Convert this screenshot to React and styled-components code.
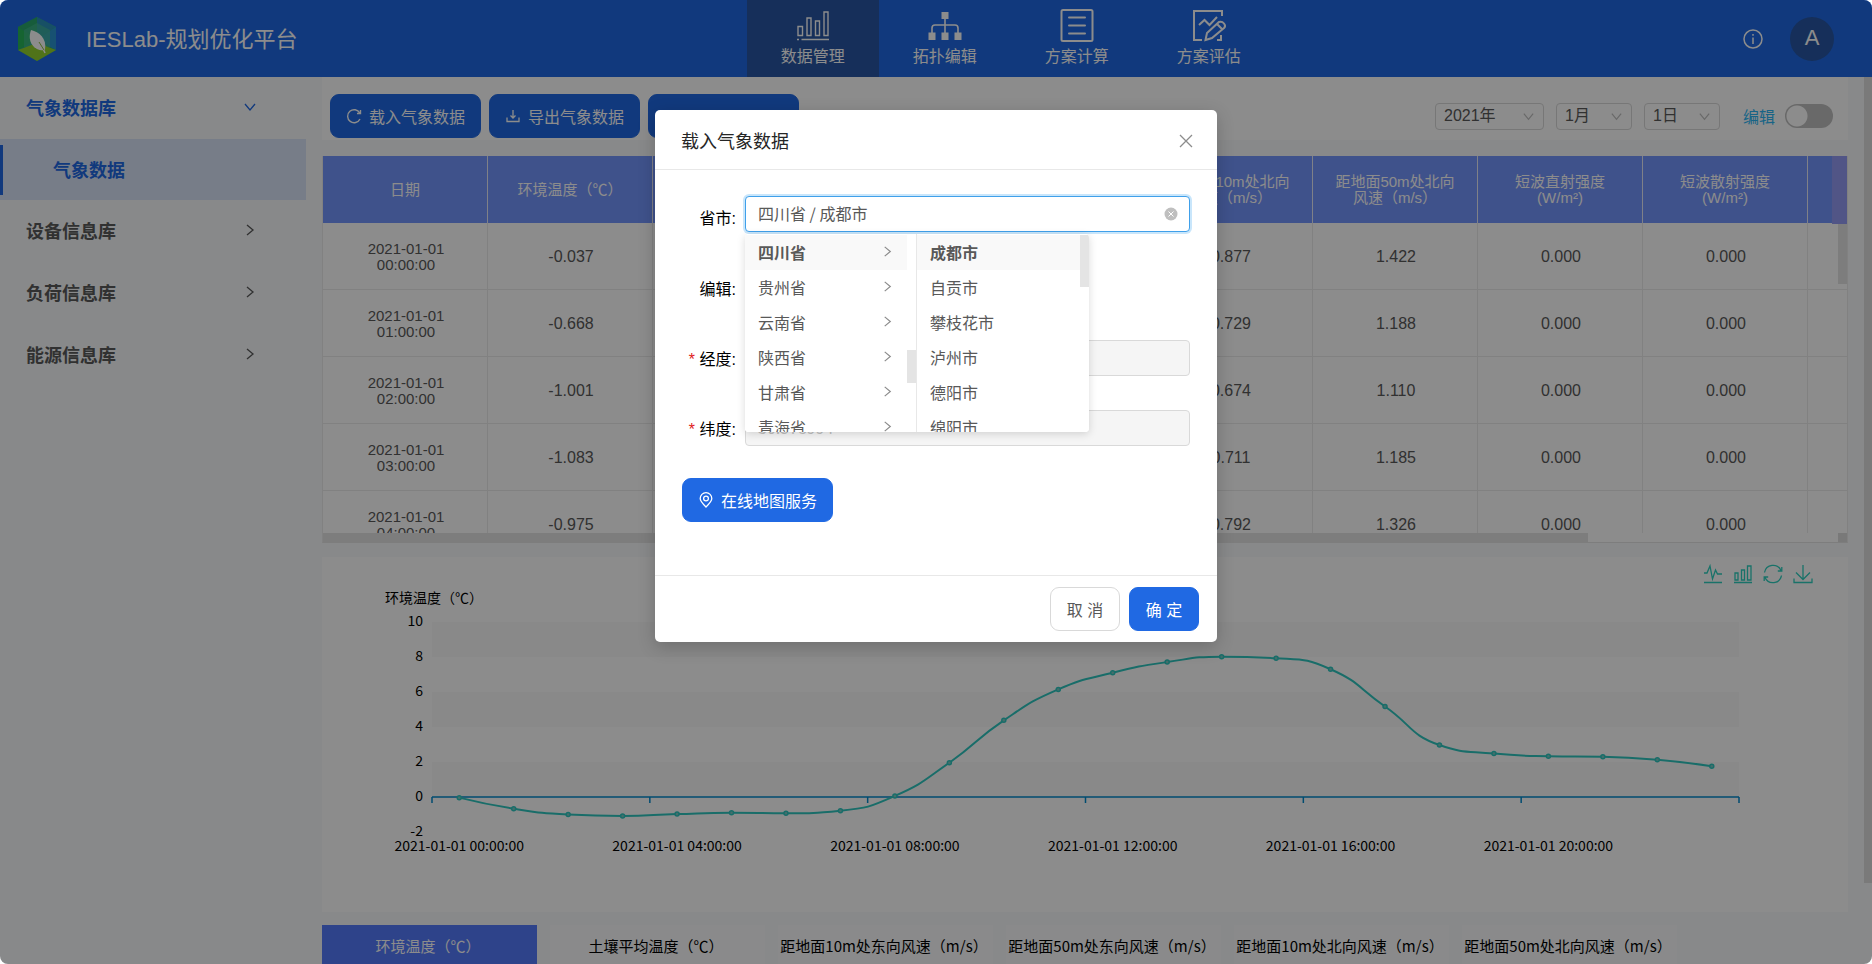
import React from "react";
import styled, { createGlobalStyle, css } from "styled-components";

const Global = createGlobalStyle`
  * { box-sizing: border-box; }
  html, body { margin: 0; background: #fff; }
  body { font-family: "Liberation Sans", "Noto Sans CJK SC", sans-serif; font-size: 16px; color: #595959; }
  button, input, select { font: inherit; color: inherit; }
`;

const blue = "#2069e3";
const cjk = `"Noto Sans CJK SC", sans-serif`;

const Shell = styled.div`
  position: relative;
  display: flex;
  flex-direction: column;
  height: 100vh;
  overflow: hidden;
  border-radius: 8px;
  background: #f7f9fb;
`;

const Header = styled.header`
  display: grid;
  grid-template-columns: 5fr auto 4fr;
  flex: none;
  height: 77px;
  background: ${blue};
  color: #fff;
`;
const Brand = styled.div`
  display: flex;
  align-items: center;
  gap: 29px;
  padding-left: 17px;
  font-size: 22px;
  span { padding-bottom: 4px; }
`;
const Nav = styled.nav`
  display: flex;
`;
const NavItem = styled.a`
  display: flex;
  flex-direction: column;
  align-items: center;
  gap: 2px;
  width: 132px;
  padding-top: 9px;
  color: #fff;
  font-size: 16px;
  line-height: 24px;
  text-decoration: none;
  background: ${(p) => (p.$active ? "#2857a4" : "transparent")};
`;
const HeaderTools = styled.div`
  display: flex;
  align-items: center;
  justify-content: flex-end;
  gap: 27px;
  padding-right: 38px;
`;
const Avatar = styled.button`
  width: 44px;
  height: 44px;
  padding: 0 0 2px;
  border: 0;
  border-radius: 50%;
  background: #2857a4;
  color: #fff;
  font-size: 22px;
`;
const IconButton = styled.button`
  display: flex;
  padding: 0;
  border: 0;
  background: none;
  color: inherit;
`;

const Body = styled.div`
  display: flex;
  flex: 1;
  min-height: 0;
`;
const Side = styled.aside`
  flex: none;
  width: 306px;
  background: #f7f9fb;
`;
const SideGroup = styled.button`
  display: flex;
  align-items: center;
  justify-content: space-between;
  width: 100%;
  height: 62px;
  padding: 0 49px 2px 26px;
  border: 0;
  background: none;
  font-size: 18px;
  font-weight: 700;
  color: ${(p) => (p.$open ? blue : "#595959")};
`;
const SideChild = styled.a`
  display: flex;
  align-items: center;
  height: 61px;
  padding: 0 0 2px 53px;
  background: linear-gradient(${blue}, ${blue}) 0 6px / 3px 50px no-repeat #d9e3f8;
  color: ${blue};
  font-size: 18px;
  font-weight: 700;
  text-decoration: none;
`;

const Main = styled.main`
  position: relative;
  flex: 1;
  min-width: 0;
  overflow: hidden;
  padding: 0 24px 0 16px;
`;
const Toolbar = styled.div`
  display: flex;
  align-items: center;
  justify-content: space-between;
  height: 63px;
  margin-bottom: 16px;
  padding: 15px 15px 0 8px;
  background: #fff;
`;
const Group = styled.div`
  display: flex;
  align-items: center;
  gap: ${(p) => p.$gap}px;
`;
const Button = styled.button`
  display: flex;
  align-items: center;
  justify-content: center;
  gap: 7px;
  min-width: ${(p) => (p.$small ? 70 : 151)}px;
  height: 44px;
  padding: 0;
  border: 1px solid ${(p) => (p.$plain ? "#d9d9d9" : blue)};
  border-radius: 9px;
  background: ${(p) => (p.$plain ? "#fff" : blue)};
  color: ${(p) => (p.$plain ? "#595959" : "#fff")};
  font-size: 16px;
  white-space: pre;
`;
const SelectBox = styled.label`
  position: relative;
  display: block;
  width: ${(p) => p.$w}px;
  svg { position: absolute; right: 9px; top: 7px; pointer-events: none; color: #bfbfbf; }
`;
const Select = styled.select`
  appearance: none;
  display: block;
  width: 100%;
  height: 27px;
  padding: 0 8px 2px;
  border: 1px solid #d9d9d9;
  border-radius: 4px;
  background: #fff;
  font-size: 16px;
`;
const SwitchLabel = styled.label`
  display: flex;
  align-items: center;
  gap: 10px;
  margin-left: 11px;
  color: #2db7f5;
`;
const Switch = styled.input`
  appearance: none;
  width: 48px;
  height: 24px;
  margin: 0;
  border-radius: 12px;
  background: radial-gradient(circle at 12px 12px, #fff 10px, transparent 11px) #bfbfbf;
`;

const TableBox = styled.section`
  position: relative;
  height: 387px;
  overflow: hidden;
  background: #fff;
  border-left: 1px solid #ececec;
  border-right: 1px solid #ececec;
  border-bottom: 1px solid #e4e4e4;
`;
const Table = styled.table`
  width: 1650px;
  table-layout: fixed;
  border-collapse: separate;
  border-spacing: 0;
  text-align: center;
  line-height: 16px;
`;
const Th = styled.th`
  height: 67px;
  padding: 0 16px;
  border-right: 1px solid #e8ecf8;
  background: #7495fd;
  color: #fff;
  font-size: 15px;
  font-weight: 400;
  white-space: pre-line;
`;
const Td = styled.td`
  height: 67px;
  padding: 2px 30px 0 32px;
  border-right: 1px solid #ececec;
  border-bottom: 1px solid #ececec;
  font-size: ${(p) => (p.$date ? 15 : 16)}px;
`;
const HeadFill = styled.div`
  position: absolute;
  top: 0;
  right: -1px;
  width: 16px;
  height: 68px;
  background: #949cf5;
`;
const VThumb = styled.div`
  position: absolute;
  top: ${(p) => p.$top}px;
  right: 0;
  width: ${(p) => p.$w || 9}px;
  height: ${(p) => p.$h}px;
  background: ${(p) => p.$c || "#e4e4e4"};
`;
const HTrack = styled.div`
  position: absolute;
  left: 0;
  right: 0;
  bottom: 0;
  display: flex;
  justify-content: space-between;
  height: 9px;
  background: #fff;
  &::before { content: ""; width: 83%; background: #e4e4e4; }
  &::after { content: ""; width: 9px; background: #dcdcdc; }
`;

const ChartCard = styled.section`
  position: relative;
  margin: 14px 0 13px;
  background: #fff;
  svg.plot { display: block; width: 100%; }
`;
const ChartTools = styled.div`
  position: absolute;
  top: 6px;
  right: 34px;
  display: flex;
  gap: 8px;
  color: #2ed0bf;
`;
const Tabs = styled.div`
  display: flex;
  gap: 13px;
`;
const Tab = styled.button`
  flex: none;
  width: 215px;
  height: 44px;
  padding: 0 3px 4px 0;
  border: 0;
  background: ${(p) => (p.$active ? "#547afc" : "#fbfcfd")};
  color: ${(p) => (p.$active ? "#fff" : "#000")};
  font-family: ${cjk};
  font-size: 15px;
  white-space: nowrap;
`;

const Mask = styled.div`
  position: absolute;
  inset: 0;
  display: flex;
  align-items: flex-start;
  justify-content: center;
  padding-top: 110px;
  background: rgba(0, 0, 0, 0.45);
`;
const Dialog = styled.section`
  display: flex;
  flex-direction: column;
  width: 562px;
  border-radius: 5px;
  background: #fff;
  box-shadow: 0 5px 18px rgba(0, 0, 0, 0.2);
`;
const DialogHead = styled.header`
  display: flex;
  align-items: center;
  justify-content: space-between;
  height: 60px;
  padding: 2px 23px 0 26px;
  border-bottom: 1px solid #e8e8e8;
  color: #8c8c8c;
  h2 { margin: 0; padding-bottom: 2px; font-size: 18px; font-weight: 400; color: #262626; }
`;
const DialogBody = styled.div`
  padding: 26px 27px 53px;
`;
const DialogFoot = styled.footer`
  display: flex;
  justify-content: flex-end;
  gap: 9px;
  padding: 11px 18px;
  border-top: 1px solid #e8e8e8;
`;
const Row = styled.div`
  display: grid;
  grid-template-columns: 63px 1fr;
  margin-bottom: ${(p) => (p.$tall || p.$last ? 28 : 30)}px;
  & > label {
    height: ${(p) => (p.$tall ? 46 : 40)}px;
    padding-right: 9px;
    line-height: ${(p) => (p.$tall ? 46 : 40)}px;
    text-align: right;
    color: #000;
    white-space: nowrap;
  }
`;
const Star = styled.span`
  margin-right: 3px;
  color: #e02020;
  font-family: "Liberation Mono", monospace;
  line-height: 1;
`;
const Control = styled.div`
  position: relative;
`;
const Field = styled.input`
  display: block;
  width: 100%;
  height: 36px;
  padding: 0 12px 2px;
  border: 1px solid #d9d9d9;
  border-radius: 4px;
  background: #fff;
  outline: 0;
  font-family: ${cjk};
  ${(p) => p.$focus && css`border-color: #40a0ea; box-shadow: 0 0 0 2px #c9e6fb;`}
  &:disabled { background: #f5f5f5; color: #bfbfbf; }
`;
const Clear = styled.button`
  position: absolute;
  top: 11px;
  right: 12px;
  display: flex;
  padding: 0;
  border: 0;
  background: none;
`;
const Popup = styled.div`
  position: absolute;
  z-index: 2;
  top: 38px;
  left: 0;
  display: flex;
  width: 344px;
  height: 198px;
  overflow: hidden;
  border-radius: 4px;
  background: #fff;
`;
const PopupShadow = styled(Popup)`
  z-index: 1;
  overflow: visible;
  box-shadow: 0 2px 9px rgba(0, 0, 0, 0.15);
`;
const Menu = styled.ul`
  position: relative;
  width: ${(p) => p.$w}px;
  margin: 0;
  padding: 1px 0 0;
  list-style: none;
  border-left: ${(p) => (p.$line ? "1px solid #e8e8e8" : 0)};
`;
const Option = styled.li`
  display: flex;
  align-items: center;
  justify-content: space-between;
  height: 35px;
  margin-right: 9px;
  padding: 0 13px 2px;
  background: ${(p) => (p.$on ? "#f9f9f9" : "#fff")};
  font-weight: ${(p) => (p.$on ? 700 : 400)};
  svg { color: #8c8c8c; }
`;

const Svg = ({ w, h, box, sw = 1, children, ...rest }) => (
  <svg width={w} height={h || w} viewBox={box || `0 0 ${w} ${h || w}`} fill="none" stroke="currentColor" strokeWidth={sw} aria-hidden="true" {...rest}>
    {children}
  </svg>
);
const Chevron = ({ down, s = 14 }) => (
  <Svg w={s} box="0 0 14 14" sw={1.3}>
    <path d={down ? "M2 4l5 6 5-6" : "M4 2l6 5-6 5"} />
  </Svg>
);

const Logo = () => (
  <svg width="40" height="46" viewBox="0 0 40 46" aria-hidden="true">
    <path d="M20 1L39 11V34L20 45L1 34V11Z" fill="#27a68a" />
    <path d="M20 1L39 11L20 23Z" fill="#2a93b8" />
    <path d="M39 11V34L20 23Z" fill="#2b94cf" />
    <path d="M20 1L1 11L20 23Z" fill="#2aa86c" />
    <path d="M1 11V34L20 23Z" fill="#28b65a" />
    <path d="M20 7L33 14V31H7V14Z" fill="#46b890" fillOpacity="0.6" />
    <path d="M1 34L20 27L39 34L20 45Z" fill="#93d12e" />
    <path d="M14 14C22 16 30 22 28 34C20 36 9 28 14 14Z" fill="#fff" />
    <path d="M24 28L28 37" stroke="#fff" strokeWidth="1.5" />
    <path d="M22 26L27 34" stroke="#8fc040" strokeWidth="1" />
  </svg>
);

const navIcons = {
  data: (
    <Svg w={34} sw={1.4}>
      <path d="M2 17.500h4.500v9H2zM11 9h4v17.500h-4zM19.500 12h4v14.500h-4zM28 3h4v23.500h-4z" />
      <path d="M1 30.500h2M5.500 30.500H33" />
    </Svg>
  ),
  topo: (
    <Svg w={34} sw={1.6}>
      <path d="M17 10v14M4 24v-5q0-3 3-3h20q3 0 3 3v5" />
      <path fill="currentColor" stroke="none" d="M13.500 3h7v7h-7zM.500 23.500h7v7.500h-7zM13.500 23.500h7v7.500h-7zM26.500 23.500h7v7.500h-7z" />
    </Svg>
  ),
  calc: (
    <Svg w={34} sw={2}>
      <rect x="1.500" y="1" width="31" height="31" rx="1.500" />
      <path d="M9 8.500h16M9 16.500h16M9 24.500h16" strokeLinecap="round" />
    </Svg>
  ),
  judge: (
    <Svg w={34} sw={2}>
      <path d="M30 7V2H2v29h8M25 31h4v-5" />
      <path d="M7 16l5.500-5 5 5L25 8" />
      <path d="M13.500 31l1.500-7L27 13q3-1 5 1.500t0 4.500L20 29zM25 15l5 5" />
    </Svg>
  ),
};
const navItems = [
  ["data", "数据管理"],
  ["topo", "拓扑编辑"],
  ["calc", "方案计算"],
  ["judge", "方案评估"],
];

const columns = [
  "日期", "环境温度（℃）", "土壤平均温度（℃）", "距地面10m处东向\n风速（m/s）", "距地面50m处东向\n风速（m/s）",
  "距地面10m处北向\n风速（m/s）", "距地面50m处北向\n风速（m/s）", "短波直射强度\n(W/m²)", "短波散射强度\n(W/m²)", "",
];
const rows = [
  ["00", "-0.037", "0.877", "1.422"],
  ["01", "-0.668", "0.729", "1.188"],
  ["02", "-1.001", "0.674", "1.110"],
  ["03", "-1.083", "0.711", "1.185"],
  ["04", "-0.975", "0.792", "1.326"],
];

const temps = [
  -0.037, -0.668, -1.001, -1.083, -0.975, -0.9, -0.93, -0.78, 0.06, 1.96, 4.38, 6.15,
  7.1, 7.71, 8.02, 7.93, 7.3, 5.17, 2.97, 2.48, 2.33, 2.3, 2.13, 1.76,
];
const plot = { x: 110, w: 1307, zero: 240, unit: 17.5 };
const step = plot.w / temps.length;
const points = temps.map((t, i) => [plot.x + step * (i + 0.5), plot.zero - t * plot.unit]);

function smoothPath(pts, smooth = 0.5) {
  const clamp = (v, a, b) => Math.max(Math.min(a, b), Math.min(Math.max(a, b), v));
  const handles = pts.map((p, i) => {
    const a = pts[i - 1];
    const b = pts[i + 1];
    if (!a || !b) return [p, p];
    const d0 = Math.hypot(p[0] - a[0], p[1] - a[1]);
    const d1 = Math.hypot(b[0] - p[0], b[1] - p[1]);
    const r = d1 / (d0 + d1);
    const vx = (b[0] - a[0]) * smooth;
    const vy = (b[1] - a[1]) * smooth;
    const out = [p[0] + vx * r, clamp(p[1] + vy * r, p[1], b[1])];
    const k = d0 / d1;
    const inn = [p[0] - (out[0] - p[0]) * k, clamp(p[1] - (out[1] - p[1]) * k, a[1], p[1])];
    return [inn, [p[0] + (p[0] - inn[0]) / k, p[1] + (p[1] - inn[1]) / k]];
  });
  return pts.reduce(
    (d, p, i) => (i ? `${d}C${handles[i - 1][1]} ${handles[i][0]} ${p}` : `M${p}`),
    ""
  );
}

const Chart = () => (
  <svg className="plot" viewBox="0 0 1526 355" role="img" aria-label="环境温度曲线" fontFamily='"Noto Sans CJK SC", sans-serif' fontSize="14">
    {[8, 4, 0].map((v) => (
      <rect key={v} x={plot.x} y={plot.zero - (v + 2) * plot.unit} width={plot.w} height={plot.unit * 2} fill="#fafafa" />
    ))}
    <text x="63" y="46">环境温度（℃）</text>
    {[10, 8, 6, 4, 2, 0, -2].map((v) => (
      <text key={v} x="101" y={plot.zero - v * plot.unit + 4} textAnchor="end">{v}</text>
    ))}
    <path d={`M${plot.x} 240H${plot.x + plot.w}`} stroke="#008acd" strokeWidth="1.5" />
    {[0, 1, 2, 3, 4, 5, 6].map((k) => (
      <path key={k} d={`M${plot.x + step * 4 * k} 240v6`} stroke="#008acd" strokeWidth="1.5" />
    ))}
    {["00", "04", "08", "12", "16", "20"].map((h, k) => (
      <text key={h} x={plot.x + step * (k * 4 + 0.5)} y="294" textAnchor="middle">{`2021-01-01 ${h}:00:00`}</text>
    ))}
    <path d={smoothPath(points)} fill="none" stroke="#2ec7c0" strokeWidth="2" />
    {points.map(([x, y]) => (
      <circle key={x} cx={x} cy={y} r="2" fill="#7fc9c4" stroke="#2ec7c0" strokeWidth="1.5" />
    ))}
  </svg>
);

const tabNames = [
  "环境温度（℃）", "土壤平均温度（℃）", "距地面10m处东向风速（m/s）",
  "距地面50m处东向风速（m/s）", "距地面10m处北向风速（m/s）", "距地面50m处北向风速（m/s）",
];
const provinces = ["四川省", "贵州省", "云南省", "陕西省", "甘肃省", "青海省"];
const cities = ["成都市", "自贡市", "攀枝花市", "泸州市", "德阳市", "绵阳市"];

const DateSelect = ({ value, w, name }) => (
  <SelectBox $w={w}>
    <Select aria-label={name} defaultValue={value}>
      <option>{value}</option>
    </Select>
    <Chevron down s={13} />
  </SelectBox>
);

const LoadDialog = () => (
  <Mask>
    <Dialog role="dialog" aria-labelledby="dialog-title">
      <DialogHead>
        <h2 id="dialog-title">载入气象数据</h2>
        <IconButton aria-label="关闭">
          <Svg w={16} sw={1.3}><path d="M2 2l12 12M14 2L2 14" /></Svg>
        </IconButton>
      </DialogHead>
      <DialogBody>
        <Row $tall>
          <label htmlFor="city">省市:</label>
          <Control>
            <Field id="city" $focus defaultValue="四川省 / 成都市" />
            <Clear aria-label="清除">
              <Svg w={14} stroke="#fff"><circle cx="7" cy="7" r="6.500" fill="#bfbfbf" stroke="none" /><path d="M4.500 4.500l5 5M9.500 4.500l-5 5" /></Svg>
            </Clear>
            <PopupShadow />
            <Popup>
              <Menu $w={171}>
                {provinces.map((p, i) => (
                  <Option key={p} $on={i === 0}>{p}<Chevron s={13} /></Option>
                ))}
                <VThumb $top={116} $h={33} />
              </Menu>
              <Menu $w={173} $line>
                {cities.map((c, i) => (
                  <Option key={c} $on={i === 0}>{c}</Option>
                ))}
                <VThumb $top={1} $h={52} />
              </Menu>
            </Popup>
          </Control>
        </Row>
        <Row><label>编辑:</label></Row>
        <Row>
          <label htmlFor="lng"><Star>*</Star>经度:</label>
          <Control><Field id="lng" disabled /></Control>
        </Row>
        <Row $last>
          <label htmlFor="lat"><Star>*</Star>纬度:</label>
          <Control><Field id="lat" disabled defaultValue="30.578994" /></Control>
        </Row>
        <Group $gap={0}>
          <Button>
            <Svg w={16} sw={1.3}><path d="M8 15C4 11 2.200 9 2.200 6.500a5.800 5.800 0 0 1 11.600 0C13.800 9 12 11 8 15z" /><circle cx="8" cy="6.500" r="2.400" /></Svg>
            在线地图服务
          </Button>
        </Group>
      </DialogBody>
      <DialogFoot>
        <Button $small $plain>取 消</Button>
        <Button $small>确 定</Button>
      </DialogFoot>
    </Dialog>
  </Mask>
);

export default function App() {
  return (
    <Shell>
      <Global />
      <Header>
        <Brand><Logo /><span>IESLab-规划优化平台</span></Brand>
        <Nav>
          {navItems.map(([id, name]) => (
            <NavItem key={id} href="#" $active={id === "data"}>{navIcons[id]}{name}</NavItem>
          ))}
        </Nav>
        <HeaderTools>
          <IconButton aria-label="信息">
            <Svg w={20} sw={1.5}><circle cx="10" cy="10" r="9" /><path d="M10 8.500V15M10 5v1.800" /></Svg>
          </IconButton>
          <Avatar>A</Avatar>
        </HeaderTools>
      </Header>
      <Body>
        <Side>
          <SideGroup $open>气象数据库<Chevron down /></SideGroup>
          <SideChild href="#">气象数据</SideChild>
          {["设备信息库", "负荷信息库", "能源信息库"].map((n) => (
            <SideGroup key={n}>{n}<Chevron /></SideGroup>
          ))}
        </Side>
        <Main>
          <Toolbar>
            <Group $gap={8}>
              <Button>
                <Svg w={16} sw={1.4}><path d="M13.800 5A6.500 6.500 0 1 0 14 11M14.500 2v3.500H11" /></Svg>
                载入气象数据
              </Button>
              <Button>
                <Svg w={16} sw={1.3}><path d="M8 2v8M5.500 7.500L8 10l2.500-2.500M2 9.500V13.500h12V9.500" /></Svg>
                导出气象数据
              </Button>
              <Button aria-label="更多操作" />
            </Group>
            <Group $gap={12}>
              <DateSelect name="年" value="2021年" w={109} />
              <DateSelect name="月" value="1月" w={76} />
              <DateSelect name="日" value="1日" w={76} />
              <SwitchLabel>编辑<Switch type="checkbox" role="switch" /></SwitchLabel>
            </Group>
          </Toolbar>
          <TableBox>
            <Table>
              <thead>
                <tr>{columns.map((c, i) => <Th key={i}>{c}</Th>)}</tr>
              </thead>
              <tbody>
                {rows.map(([h, t, n10, n50]) => (
                  <tr key={h}>
                    <Td $date>2021-01-01 {h}:00:00</Td>
                    <Td>{t}</Td>
                    <Td /><Td /><Td />
                    <Td>{n10}</Td>
                    <Td>{n50}</Td>
                    <Td>0.000</Td>
                    <Td>0.000</Td>
                    <Td />
                  </tr>
                ))}
              </tbody>
            </Table>
            <HeadFill />
            <VThumb $top={68} $h={60} />
            <HTrack />
          </TableBox>
          <ChartCard>
            <Chart />
            <ChartTools>
              <IconButton aria-label="折线图"><Svg w={22} sw={1.3}><path d="M2 10h3l3-7 2.500 13 3-9 2 4H20M2 19.500h18" /></Svg></IconButton>
              <IconButton aria-label="柱状图"><Svg w={22} sw={1.3}><path d="M3 10h3v7H3zM9.500 7h3v10h-3zM15.500 3h3.500v14h-3.500zM2 19.500h18" /></Svg></IconButton>
              <IconButton aria-label="还原"><Svg w={22} sw={1.3}><path d="M2.500 9.500a8.700 8.700 0 0 1 16.500-2M19.800 4v4h-4M19.500 12.500a8.700 8.700 0 0 1-16.500 2M2.200 18v-4h4" /></Svg></IconButton>
              <IconButton aria-label="下载"><Svg w={22} sw={1.3}><path d="M11 2v14M4 9.500l7 7 7-7M2 15.500v4h18v-4" /></Svg></IconButton>
            </ChartTools>
          </ChartCard>
          <Tabs role="tablist">
            {tabNames.map((t, i) => (
              <Tab key={t} role="tab" aria-selected={i === 0} $active={i === 0}>{t}</Tab>
            ))}
          </Tabs>
          <VThumb $top={0} $h={806} $w={8} $c="#dedede" />
        </Main>
      </Body>
      <LoadDialog />
    </Shell>
  );
}
